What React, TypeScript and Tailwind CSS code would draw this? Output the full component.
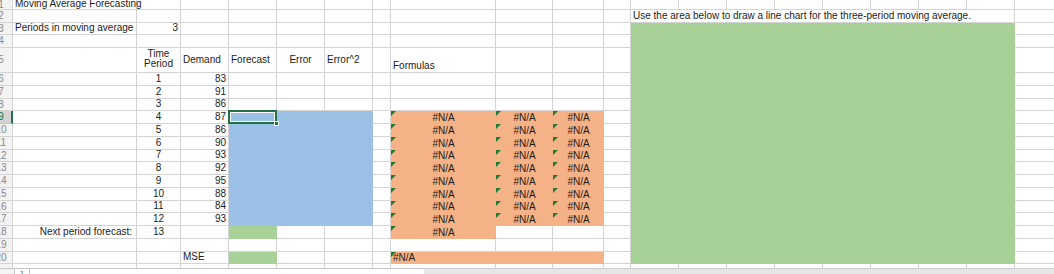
import React from "react";

type C = {
  t?: string;
  a?: "l" | "r" | "c" | "lc" | "cc";
  f?: "b" | "o" | "g";
  tri?: boolean;
  span8?: boolean;
  sel?: boolean;
  multi?: boolean;
  padR?: boolean;
  part?: boolean;
  top?: boolean;
};

const FILL = {
  b: "bg-[#9bc2e6]",
  o: "bg-[#f5b286]",
  g: "bg-[#a7d196]",
} as const;

const ALIGN = {
  l: "justify-start items-end",
  r: "justify-end items-end",
  c: "justify-center items-end",
  lc: "justify-start items-center",
  cc: "justify-center items-center text-center",
} as const;

const e = (n: number): C[] => Array.from({ length: n }, () => ({}));
const g8 = (): C[] => Array.from({ length: 8 }, () => ({ f: "g" as const }));

const demand = [83, 91, 86, 87, 86, 90, 93, 92, 95, 88, 84, 93];

const rows: C[][] = [];
rows.push([{ t: "Moving Average Forecasting", top: true }, ...e(19)]);
rows.push([...e(11), { t: "Use the area below to draw a line chart for the three-period moving average.", span8: true }, {}]);
rows.push([{ t: "Periods in moving average" }, { t: "3", a: "r" }, ...e(9), ...g8(), {}]);
rows.push([...e(11), ...g8(), {}]);
rows.push([
  {},
  { t: "Time\nPeriod", a: "cc", multi: true },
  { t: "Demand", a: "lc" },
  { t: "Forecast", a: "lc" },
  { t: "Error", a: "cc" },
  { t: "Error^2", a: "lc" },
  {},
  { t: "Formulas" },
  {},
  {},
  {},
  ...g8(),
  {},
]);
demand.forEach((d, i) => {
  const p = i + 1;
  const on = p >= 4;
  const na: C = on ? { f: "o", t: "#N/A", a: "c", tri: true } : {};
  rows.push([
    {},
    { t: String(p), a: "c" },
    { t: String(d), a: "r" },
    on ? { f: "b", sel: p === 4 } : {},
    on ? { f: "b" } : {},
    on ? { f: "b" } : {},
    {},
    { ...na },
    { ...na },
    { ...na },
    {},
    ...g8(),
    {},
  ]);
});
rows.push([
  { t: "Next period forecast:", a: "r", padR: true },
  { t: "13", a: "c" },
  {},
  { f: "g" },
  {},
  {},
  {},
  { f: "o", t: "#N/A", a: "c", tri: true },
  {},
  {},
  {},
  ...g8(),
  {},
]);
rows.push([...e(11), ...g8(), {}]);
rows.push([
  {},
  {},
  { t: "MSE" },
  { f: "g" },
  {},
  {},
  {},
  { f: "o", t: "#N/A", tri: true },
  { f: "o" },
  { f: "o" },
  {},
  ...g8(),
  {},
]);
rows.push(Array.from({ length: 20 }, () => ({ part: true })));

function Cell({ c }: { c: C }) {
  const align = ALIGN[c.a ?? "l"];
  const look = c.part
    ? "border-r border-[#d4d4d4]"
    : c.f
    ? FILL[c.f]
    : "border-r border-b border-[#d4d4d4]";
  return (
    <div
      className={[
        "relative flex min-w-0 whitespace-nowrap pl-[2px]",
        c.padR ? "pr-[4px]" : "pr-[2px]",
        c.multi
          ? "whitespace-pre-line leading-[10px] pb-[2px]"
          : c.top
          ? "leading-[10px]"
          : "leading-[12px]",
        c.span8 ? "col-span-8" : "",
        align,
        look,
      ].join(" ")}
    >
      {c.tri && (
        <span className="absolute left-0 top-0 h-[5px] w-[5px] bg-[#1f7a34] [clip-path:polygon(0_0,100%_0,0_100%)]" />
      )}
      {c.t}
      {c.sel && (
        <>
          <span className="absolute left-[-1px] top-[-1px] z-10 h-[14px] w-[49px] border-2 border-[#217346]">
            <span className="block h-full w-full border border-white" />
          </span>
          <span className="absolute left-[45px] top-[10px] z-20 h-[5px] w-[5px] border border-white bg-[#217346]" />
        </>
      )}
    </div>
  );
}

function RowHead({ n, sel, part }: { n: number; sel: boolean; part: boolean }) {
  return (
    <div
      className={[
        "flex items-center overflow-hidden leading-[10px]",
        part ? "border-r border-[#d4d4d4] bg-[#f3f3f3]" : "border-b",
        !part && sel ? "border-r-2 border-r-[#217346] border-b-[#c6c6c6] bg-[#d4d4d4] text-[#217346]" : "",
        !part && !sel ? "border-r border-[#d4d4d4] bg-[#f3f3f3] text-[#8a8a8a]" : "",
      ].join(" ")}
    >
      {!part && <span className="ml-[-15px] w-[32px] shrink-0 text-center">{n}</span>}
    </div>
  );
}

export default function App() {
  return (
    <div className="h-[274px] w-[1054px] overflow-hidden bg-white font-['Liberation_Sans',Arial,sans-serif] text-[10px] text-[#1c1c1c]">
      <div className="grid grid-cols-[13px_124px_44px_48px_48px_48px_48px_18px_105px_57px_51px_27px_repeat(9,48px)] grid-rows-[10px_13px_12px_13px_25px_13px_13px_12px_13px_13px_13px_12px_13px_13px_13px_12px_13px_13px_13px_12px_4px]">
        {rows.map((r, ri) => (
          <React.Fragment key={ri}>
            <RowHead n={ri + 1} sel={ri === 8} part={ri === 20} />
            {r.map((c, ci) => (
              <Cell key={ci} c={c} />
            ))}
          </React.Fragment>
        ))}
      </div>
      <div className="flex h-[6px]">
        <div className="w-[15px] border-r border-t border-[#c6c6c6] bg-[#f3f3f3]" />
        <div className="flex w-[409px] border-t border-[#c6c6c6] bg-white">
          <div className="w-[15px] overflow-hidden border-r border-[#c6c6c6] text-center text-[8px] leading-[10px] text-[#555]">1</div>
        </div>
        <div className="flex-1 border-t border-[#d0d0d0] bg-[#e6e6e6]" />
      </div>
    </div>
  );
}
